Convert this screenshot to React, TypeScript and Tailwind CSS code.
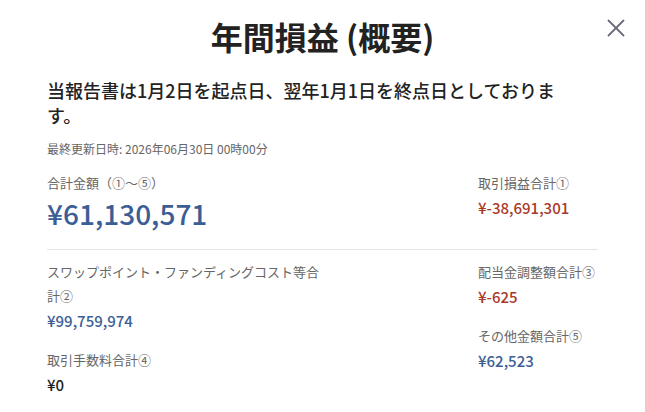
import React from 'react';

type Item = { label: string; value: string; tone: 'blue' | 'red' | 'plain' };

const toneClass = {
    blue: 'text-[#3b5e94]',
    red: 'text-[#a8392b]',
    plain: 'text-[#222222]',
};

// label + amount pair used in the breakdown
const Entry: React.FC<{ item: Item; className?: string }> = ({ item, className = '' }) => (
    <div className={className}>
        <p className="text-[13px] leading-[24px] text-[#666666]">{item.label}</p>
        <p className={`mt-[2px] text-[15px] leading-[22px] font-medium ${toneClass[item.tone]}`}>{item.value}</p>
    </div>
);

const CloseIcon: React.FC = () => (
    <svg width="18" height="18" viewBox="0 0 18 18" fill="none" stroke="currentColor" strokeWidth="1.8" strokeLinecap="round">
        <path d="M1.5 1.5 16.5 16.5" />
        <path d="M16.5 1.5 1.5 16.5" />
    </svg>
);

const App: React.FC = () => {
    return (
        <div className="relative w-[645px] h-[412px] overflow-hidden bg-white font-['Noto_Sans_CJK_JP','Noto_Sans',sans-serif] text-[#222222]">
            {/* header */}
            <div className="pt-[14px] text-center">
                <h1 className="text-[32px] leading-[44px] font-bold">年間損益 (概要)</h1>
            </div>
            <button className="absolute left-[607px] top-[19px] text-[#6b6b7d]">
                <CloseIcon />
            </button>

            <div className="px-[47px]">
                <p className="mt-[20px] max-w-[515px] text-[18px] leading-[25px] font-medium">
                    当報告書は1月2日を起点日、翌年1月1日を終点日としております。
                </p>
                <p className="mt-[12px] text-[12px] leading-[18px] text-[#666666]">最終更新日時: 2026年06月30日 00時00分</p>

                {/* total */}
                <div className="mt-[15px] flex justify-between pb-[16px] border-b border-[#e3e3e3]">
                    <div>
                        <p className="text-[13px] leading-[20px] text-[#666666]">合計金額（①〜⑤）</p>
                        <p className="text-[28px] leading-[40px] font-medium text-[#3b5e94]">¥61,130,571</p>
                    </div>
                    <div className="w-[120px]">
                        <p className="text-[13px] leading-[20px] text-[#666666]">取引損益合計①</p>
                        <p className="mt-[4px] text-[15px] leading-[22px] font-medium text-[#a8392b]">¥-38,691,301</p>
                    </div>
                </div>

                {/* breakdown */}
                <div className="mt-[10px] flex justify-between">
                    <div className="w-[280px] flex flex-col gap-[16px]">
                        <Entry item={{ label: 'スワップポイント・ファンディングコスト等合計②', value: '¥99,759,974', tone: 'blue' }} />
                        <Entry item={{ label: '取引手数料合計④', value: '¥0', tone: 'plain' }} />
                    </div>
                    <div className="w-[120px] flex flex-col gap-[16px]">
                        <Entry item={{ label: '配当金調整額合計③', value: '¥-625', tone: 'red' }} />
                        <Entry item={{ label: 'その他金額合計⑤', value: '¥62,523', tone: 'blue' }} />
                    </div>
                </div>
            </div>
        </div>
    );
};

export default App;
